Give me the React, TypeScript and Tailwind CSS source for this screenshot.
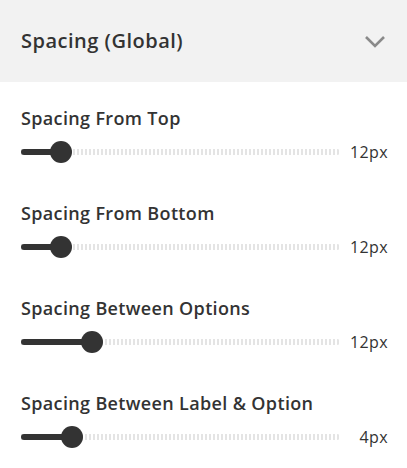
import React from "react";

const rows = [
  { label: "Spacing From Top", value: "12px", pos: 40 },
  { label: "Spacing From Bottom", value: "12px", pos: 40 },
  { label: "Spacing Between Options", value: "12px", pos: 71 },
  { label: "Spacing Between Label & Option", value: "4px", pos: 51 },
];

function Slider({ pos, value }: { pos: number; value: string }) {
  return (
    <div className="flex items-center h-[24px]">
      <div className="relative flex-1 h-[24px]">
        <div className="absolute left-0 right-0 top-[9px] h-[6px] rounded-r-full bg-[repeating-linear-gradient(90deg,#e4e4e4_0_2px,transparent_2px_4px)]" />
        <div
          className="absolute left-0 top-[9px] h-[6px] rounded-full bg-[#333333]"
          style={{ width: pos }}
        />
        <div
          className="absolute top-[1px] w-[22px] h-[22px] rounded-full bg-[#333333]"
          style={{ left: pos - 11 }}
        />
      </div>
      <div className="w-[48px] text-right text-[16px] text-[#333333] leading-none tracking-[0.4px]">
        {value}
      </div>
    </div>
  );
}

export default function App() {
  return (
    <div
      className="w-[407px] h-[468px] bg-white overflow-hidden"
      style={{ fontFamily: '"Open Sans", "Noto Sans", sans-serif' }}
    >
      <div className="h-[82px] bg-[#f2f2f2] flex items-center justify-between pl-[21px] pr-[21px]">
        <div className="text-[20px] font-semibold text-[#333333] tracking-[0.5px]">
          Spacing (Global)
        </div>
        <svg width="22" height="14" viewBox="0 0 22 14" className="mt-[2px]">
          <path d="M2 2 L11 11 L20 2" fill="none" stroke="#8a8a8a" strokeWidth="2.6" />
        </svg>
      </div>
      <div className="pl-[21px] pr-[19px] pt-[24px] flex flex-col gap-[37px]">
        {rows.map((r) => (
          <div key={r.label} className="flex flex-col gap-[10px]">
            <div className="text-[18px] font-semibold text-[#333333] leading-[24px] tracking-[0.35px]">
              {r.label}
            </div>
            <Slider pos={r.pos} value={r.value} />
          </div>
        ))}
      </div>
    </div>
  );
}
